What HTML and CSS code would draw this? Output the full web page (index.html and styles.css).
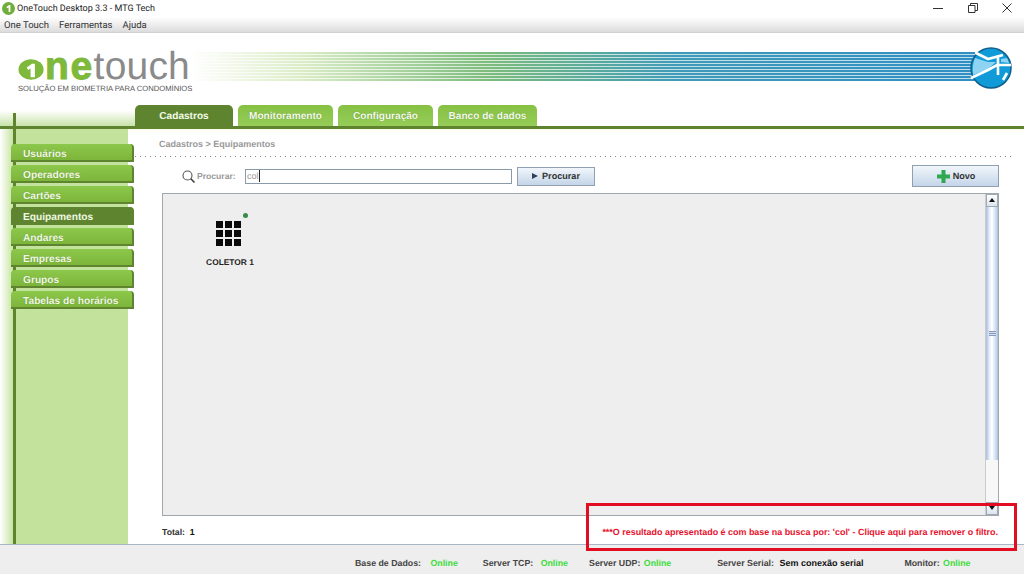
FILE: index.html
```html
<!DOCTYPE html>
<html lang="pt-BR">
<head>
    <meta charset="UTF-8">
    <title>OneTouch Desktop 3.3 - MTG Tech</title>
    <link rel="stylesheet" href="styles.css">
</head>
<body>

<div class="titlebar">
    <svg class="app-icon" width="13" height="13" viewBox="0 0 13 13">
        <circle cx="6.5" cy="6.5" r="6.5" fill="#6fae3a"/>
        <path d="M4.5 5 7 3h1.4v7H6.6V5.2L5 6.2z" fill="#fff"/>
    </svg>
    <span class="app-title">OneTouch Desktop 3.3 - MTG Tech</span>
    <div class="win-buttons">
        <svg width="10" height="10" viewBox="0 0 10 10"><path d="M0 5.5h10" stroke="#333" fill="none"/></svg>
        <svg width="10" height="10" viewBox="0 0 10 10"><path d="M.5 2.5h6.5v7H.5zM2.5 2.5V.5h7v7H7" stroke="#333" fill="none"/></svg>
        <svg width="10" height="10" viewBox="0 0 10 10"><path d="M.5.5l9 9M9.5.5l-9 9" stroke="#333" fill="none"/></svg>
    </div>
</div>

<div class="menubar">
    <span>One Touch</span>
    <span>Ferramentas</span>
    <span>Ajuda</span>
</div>

<div class="header">
    <div class="logo">
        <div class="logo-word">
            <svg class="logo-o" width="27" height="21" viewBox="0 0 27 21">
                <ellipse cx="13.5" cy="10.5" rx="13" ry="10.5" fill="#7fb93c"/>
                <path d="M9 8.500 14.500 4.500h3V18.500h-4.500V9.500L10.500 11z" fill="#fff"/>
            </svg>
            <span class="logo-ne">ne</span><span class="logo-touch">touch</span>
        </div>
        <div class="logo-sub">SOLUÇÃO EM BIOMETRIA PARA CONDOMÍNIOS</div>
    </div>
    <div class="stripes"></div>
    <svg class="globe" width="42" height="42" viewBox="0 0 42 42">
        <circle cx="21" cy="21" r="20" fill="#109bd8" stroke="#0f5f8c" stroke-width="1.5"/>
        <path d="M5 11 18 15 26 15 18 22 3 28Q2 18 5 11z" fill="#8fd3f2"/>
        <path d="M31 12 37 11 39 16 31 15z" fill="#8fd3f2"/>
        <path d="M6 6 18 12 33 8M28 8V28M1 31 18 23 27 18 41 18M33 33 37 26" stroke="#fff" stroke-width="2.6" fill="none"/>
    </svg>
</div>

<div class="tabs-row">
    <div class="tabs">
        <div class="tab active">Cadastros</div>
        <div class="tab">Monitoramento</div>
        <div class="tab">Configuração</div>
        <div class="tab">Banco de dados</div>
    </div>
    <i class="tree-line"></i>
</div>

<div class="body-row">
    <div class="sidebar">
        <div class="side-item">Usuários</div>
        <div class="side-item">Operadores</div>
        <div class="side-item">Cartões</div>
        <div class="side-item active">Equipamentos</div>
        <div class="side-item">Andares</div>
        <div class="side-item">Empresas</div>
        <div class="side-item">Grupos</div>
        <div class="side-item">Tabelas de horários</div>
    </div>

    <div class="content">
        <div class="breadcrumb">Cadastros &gt; Equipamentos</div>

        <div class="search-row">
            <svg class="lens" width="13" height="13" viewBox="0 0 13 13">
                <circle cx="5.5" cy="5.5" r="4.5" fill="none" stroke="#555" stroke-width="1.1"/>
                <path d="M8.8 8.8 12.5 12.5" stroke="#333" stroke-width="1.4"/>
            </svg>
            <span class="search-label">Procurar:</span>
            <div class="search-input"><span>col</span><i class="caret"></i></div>
            <div class="btn btn-search"><span class="arrow"></span>Procurar</div>
            <div class="btn btn-new">
                <svg width="15" height="15" viewBox="0 0 15 15"><path d="M7.5 1v13M1 7.5h13" stroke="#2fa84f" stroke-width="4"/></svg>
                Novo
            </div>
        </div>

        <div class="list-panel">
            <div class="list-area">
                <div class="device">
                    <i class="device-dot"></i>
                    <div class="keypad">
                        <i></i><i></i><i></i><i></i><i></i><i></i><i></i><i></i><i></i>
                    </div>
                    <div class="device-name">COLETOR 1</div>
                </div>
            </div>
            <div class="scrollbar">
                <div class="scroll-btn up"></div>
                <div class="scroll-thumb"><b></b></div>
                <div class="scroll-track"></div>
                <div class="scroll-btn down"></div>
            </div>
        </div>

        <div class="footer-row">
            <span class="total">Total:&nbsp; <b>1</b></span>
            <span class="filter-msg">***O resultado apresentado é com base na busca por: 'col' - Clique aqui para remover o filtro.</span>
        </div>
    </div>
</div>

<div class="statusbar">
    <span class="stat base">Base de Dados: <em>Online</em></span>
    <span class="stat tcp">Server TCP: <em>Online</em></span>
    <span class="stat udp">Server UDP: <em>Online</em></span>
    <span class="stat serial">Server Serial: <strong>Sem conexão serial</strong></span>
    <span class="stat monitor">Monitor: <em>Online</em></span>
</div>

<div class="highlight"></div>

</body>
</html>
```

FILE: styles.css
```css
* {
    box-sizing: border-box;
}

html, body {
    height: 100%;
}

body {
    margin: 0;
    background-color: white;
    font-family: "Liberation Sans", Arial, sans-serif;
    font-size: 10px;
    color: #333;
    overflow: hidden;
    position: relative;
    display: flex;
    flex-direction: column;
    text-rendering: geometricPrecision;
}

.titlebar {
    height: 17px;
    display: flex;
    align-items: center;
    padding-left: 2px;
    font-family: Roboto, sans-serif;
    font-size: 9px;
    color: #222;
}

.app-title {
    margin-left: 2px;
}

.win-buttons {
    margin-left: auto;
    display: flex;
    gap: 24.5px;
    padding-right: 12px;
    margin-top: -2px;
}

.menubar {
    height: 16px;
    display: flex;
    gap: 10px;
    padding: 1px 0 0 4px;
    align-items: center;
    font-family: Roboto, sans-serif;
    font-size: 9.5px;
    color: #333;
    background: linear-gradient(#ffffff, #dcdcdc);
    border-bottom: 1px solid #d0d0d0;
}

.header {
    height: 72px;
    display: flex;
    position: relative;
}

.logo {
    width: 190px;
    padding: 16px 0 0 18px;
    flex: none;
    position: relative;
    z-index: 1;
}

.logo-word {
    height: 35px;
    display: flex;
    align-items: baseline;
    font-size: 39px;
    line-height: 35px;
    white-space: nowrap;
}

.logo-o {
    align-self: flex-end;
    margin-bottom: 4px;
}

.logo-ne {
    font-weight: bold;
    color: #7fb93c;
    -webkit-text-stroke: 1px #7fb93c;
    letter-spacing: 1.5px;
    margin-left: 1px;
}

.logo-touch {
    color: #8a8a8a;
    letter-spacing: 0.2px;
}

.logo-sub {
    font-size: 7.65px;
    line-height: 10px;
    color: #555;
    white-space: nowrap;
}

.stripes {
    flex: none;
    width: 785px;
    height: 29px;
    margin-top: 19px;
    background:
        repeating-linear-gradient(#ffffff00 0, #ffffff00 2px, #ffffffb0 2px, #ffffffb0 3px),
        linear-gradient(90deg, #ffffff, #dcedc8 14%, #7cbc7c 38%, #3f9bb8 62%, #2f8fc4 100%);
}

.globe {
    flex: none;
    margin: 14px 0 0 -5px;
}

.tabs-row {
    height: 24px;
    padding-left: 135px;
    position: relative;
    background: linear-gradient(#ffffff 25%, #c8e4a8) 0 0 / 135px 100% no-repeat;
    border-bottom: 3px solid #5f8430;
}

.tree-line {
    position: absolute;
    left: 13px;
    top: 8px;
    width: 3px;
    height: 16px;
    background: #5f8430;
}

.tabs {
    display: flex;
    gap: 5px;
    height: 21px;
}

.tab {
    width: 95px;
    background: linear-gradient(#86c143, #96cc58);
    color: #f4f9ea;
    font-size: 10.1px;
    font-weight: bold;
    text-align: center;
    line-height: 23px;
    border-radius: 5px 5px 0 0;
    text-shadow: 0 0 1px #5f8f2e;
}

.tab:nth-child(1) {
    width: 98px;
}

.tab:nth-child(4) {
    width: 99px;
}

.tab.active {
    background: #5f8430;
}

.body-row {
    flex: 1;
    display: flex;
    min-height: 0;
    background: linear-gradient(#fdfde6, #ffffff 3px);
}

.sidebar {
    width: 128px;
    flex: none;
    padding: 15px 0 0 11px;
    background:
        linear-gradient(#5f8430, #5f8430) 13px 0 / 3px 100% no-repeat,
        linear-gradient(90deg, #ffffff, #c3e29b 14px);
}

.side-item {
    width: 123px;
    height: 18px;
    margin-bottom: 3px;
    padding-left: 12px;
    background: linear-gradient(#8cc84b, #7db53a);
    color: #f0f7e4;
    font-size: 10.2px;
    font-weight: bold;
    line-height: 21px;
    border-radius: 4px 4px 0 0;
    border-right: 2px solid #5f8430;
    border-bottom: 2px solid #5f8430;
    text-shadow: 0 0 1px #5f8f2e;
}

.side-item.active {
    background: #5f8430;
}

.content {
    flex: 1;
    min-width: 0;
    padding: 0 25px 0 34px;
    display: flex;
    flex-direction: column;
}

.breadcrumb {
    margin: 10px 0 0 -3px;
    font-size: 9px;
    font-weight: bold;
    color: #999;
    height: 17px;
    line-height: 10px;
    position: relative;
}

/* dotted rule under the path */
.breadcrumb::after {
    content: "";
    position: absolute;
    left: -24px;
    right: -12px;
    top: 17px;
    height: 1px;
    background: repeating-linear-gradient(90deg, #888 0, #888 1px, transparent 1px, transparent 5px);
}

.search-row {
    display: flex;
    align-items: center;
    height: 20px;
    margin-top: 10px;
    padding-left: 20px;
}

.lens {
    margin-right: 2px;
}

.search-label {
    width: 48px;
    color: #999;
    font-weight: bold;
    font-size: 8.6px;
}

.search-input {
    width: 267px;
    height: 15px;
    border: 1px solid #8a9aa8;
    background: white;
    padding-left: 1px;
    font-size: 9px;
    color: #999;
    display: flex;
    align-items: center;
}

.caret {
    width: 1px;
    height: 12px;
    background: #222;
}

.btn {
    background: linear-gradient(#f1f6fb, #c4d5e8);
    border: 1px solid #8fa0b0;
    color: #333;
    font-weight: bold;
    font-size: 9.1px;
    display: flex;
    align-items: center;
    justify-content: center;
}

.btn-search {
    width: 78px;
    height: 19px;
    margin-left: 5px;
    gap: 4px;
}

.arrow {
    border-left: 6px solid #333e5c;
    border-top: 3.5px solid transparent;
    border-bottom: 3.5px solid transparent;
}

.btn-new {
    width: 87px;
    height: 22px;
    margin-left: auto;
    gap: 2px;
}

.list-panel {
    height: 323px;
    margin-top: 7px;
    border: 1px solid #a0a8ae;
    background-color: #eeeeee;
    display: flex;
}

.list-area {
    flex: 1;
    padding: 20px 0 0 34px;
}

.device {
    width: 66px;
    display: flex;
    flex-direction: column;
    align-items: center;
    position: relative;
}

.device-dot {
    position: absolute;
    width: 5px;
    height: 5px;
    background: #3a8a4a;
    border-radius: 50%;
    top: -1px;
    left: 46px;
}

.keypad {
    margin: 7px 0 0 -3px;
    width: 25px;
    display: grid;
    grid-template-columns: repeat(3, 7px);
    grid-auto-rows: 7px;
    gap: 2px;
}

.keypad i {
    background: #0a0a0a;
}

.device-name {
    margin-top: 11px;
    font-size: 8.4px;
    font-weight: bold;
    color: #222;
    white-space: nowrap;
}

.scrollbar {
    width: 13px;
    flex: none;
    background: #f4f6f8;
    display: flex;
    flex-direction: column;
    border-left: 1px solid #c8ccd0;
}

.scroll-btn {
    height: 13px;
    background: linear-gradient(#ffffff, #dbe4ee);
    border: 1px solid #a0aab4;
    position: relative;
}

.scroll-btn::after {
    content: "";
    position: absolute;
    left: 2px;
    top: 3px;
    border-left: 3.5px solid transparent;
    border-right: 3.5px solid transparent;
}

.scroll-btn.up::after {
    border-bottom: 4px solid #111;
}

.scroll-btn.down::after {
    border-top: 4px solid #111;
}

.scroll-thumb {
    flex: 1;
    background: linear-gradient(90deg, #a8bcdc, #e8f0fa 30%, #ffffff 50%, #c8d8ee 85%, #a8bcdc);
    display: flex;
    align-items: center;
    justify-content: center;
}

.scroll-thumb b {
    width: 7px;
    height: 5px;
    background: repeating-linear-gradient(#8898c0 0, #8898c0 1px, #d8e0f0 1px, #d8e0f0 2px);
}

.scroll-track {
    height: 42px;
    background: #f7f7f7;
}

.footer-row {
    flex: 1;
    display: flex;
    justify-content: space-between;
    align-items: center;
    padding-top: 4px;
}

.total {
    font-weight: bold;
    font-size: 8.7px;
    color: #333;
}

.total b {
    color: #111;
}

.filter-msg {
    color: #e8112d;
    font-weight: bold;
    font-size: 8.95px;
    margin-right: 1px;
}

.statusbar {
    height: 30px;
    flex: none;
    background-color: #eeeeee;
    border-top: 1px solid #a9b6c6;
    font-size: 8.8px;
    font-weight: bold;
    color: #444;
    display: flex;
    align-items: center;
    padding: 6px 0 0 355px;
}

.stat {
    white-space: nowrap;
}

.stat em {
    font-style: normal;
    color: #3ddc3d;
    margin-left: 7px;
}

.stat strong {
    color: #111;
    font-size: 9px;
    margin-left: 3px;
}

.tcp { margin-left: 25px; }
.tcp em { margin-left: 5px; }
.udp { margin-left: 21px; }
.udp em { margin-left: 1px; }
.serial { margin-left: 46px; }
.monitor { margin-left: 41px; }
.monitor em { margin-left: 1px; }

/* red frame drawn over the message and the status area */
.highlight {
    position: absolute;
    left: 586px;
    top: 503px;
    width: 431px;
    height: 48px;
    border: 3px solid #e30d23;
}
```
